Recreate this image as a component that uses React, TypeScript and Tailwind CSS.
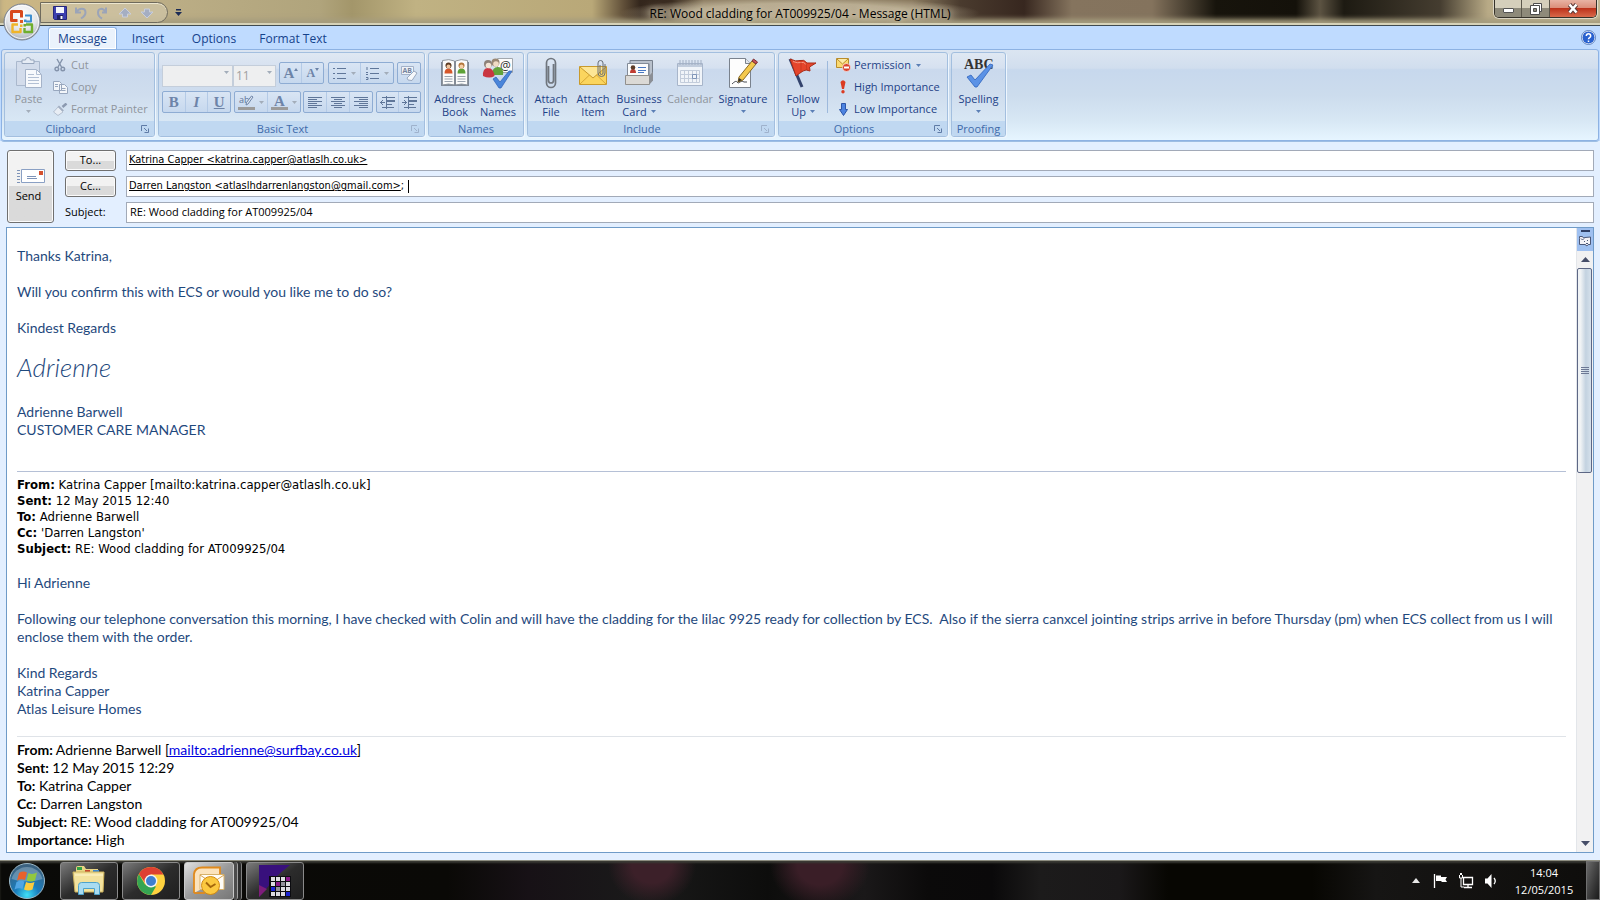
import { useState, type ReactNode } from "react";

const Caret = ({ muted = false }: { muted?: boolean }) => (
  <svg width="5" height="3" viewBox="0 0 5 3" className="shrink-0" aria-hidden="true">
    <path d="M0 0h5L2.5 3z" fill={muted ? "#a3adba" : "#5b7fb5"} />
  </svg>
);

const tabs = [
  { name: "Message", width: "w-[69px] mr-[2px]" },
  { name: "Insert", width: "w-[58px]" },
  { name: "Options", width: "w-[74px]" },
  { name: "Format Text", width: "w-[84px]" },
];

function OfficeLogo() {
  return (
    <svg width="38" height="38" viewBox="0 0 38 38" aria-hidden="true">
      <defs>
        <radialGradient id="orb" cx="50%" cy="30%" r="70%">
          <stop offset="0" stopColor="#ffffff" />
          <stop offset=".6" stopColor="#e4e6ea" />
          <stop offset="1" stopColor="#a9b0ba" />
        </radialGradient>
      </defs>
      <circle cx="19" cy="19" r="18" fill="url(#orb)" stroke="#79808c" />
      <circle cx="19" cy="19" r="16.5" fill="none" stroke="#fff" strokeOpacity=".8" />
      <g fill="none" strokeLinejoin="round">
        <path d="M14.500 17.500H8.500V8.500h10v6" stroke="#d8481c" strokeWidth="3" />
        <path d="M22 12.500h6v6h-5" stroke="#3f8fd0" strokeWidth="2" />
        <path d="M15 21.500H9.500v7.500h8v-4" stroke="#f0b429" strokeWidth="2.400" />
        <path d="M23 21.500h6v7.500h-7.500v-4" stroke="#6fae2e" strokeWidth="2.400" />
      </g>
      <g>
        <rect x="17" y="17" width="3" height="3" fill="#e05a24" />
        <rect x="21" y="16.500" width="2.500" height="2.500" fill="#3f8fd0" />
        <rect x="17" y="21.500" width="2.500" height="2.500" fill="#f0b429" />
        <rect x="20.500" y="21" width="2.500" height="2.500" fill="#6fae2e" />
      </g>
    </svg>
  );
}

function TitleBar() {
  return (
    <header className="relative flex h-[26px] items-center border-b border-[#3f4a50] bg-[radial-gradient(180px_16px_at_50%_13px,rgba(200,189,162,0.75)_60%,transparent),linear-gradient(90deg,#cdb884_0%,#c4b184_5%,#bcae86_10%,#b0a47c_20%,#a3966a_22%,#c0b283_26%,#b9a878_37%,#5f4e38_39%,#33261c_40%,#3a2c20_42%,#8b7b60_44%,#8b7b60_57%,#4a3b2e_60%,#37271f_64%,#85745e_67%,#84735d_72%,#17140c_76%,#14110a_81%,#5c5342_82.500%,#1d1a12_84%,#453d30_90%,#b8aa86_93%,#d2c8a4_100%)] shadow-[inset_0_-2px_0_#d6d2b8,inset_0_-6px_5px_#a59c7e]">
      <div className="ml-10 flex h-[21px] items-center gap-[6px] rounded-r-full border border-[#6e6a5c] bg-[#d0c6a8]/70 px-3 shadow-[inset_0_1px_0_#ece6cf]">
        <button type="button" aria-label="Save">
          <svg width="14" height="14" viewBox="0 0 14 14">
            <path d="M.5.5h13v13h-12l-1-1z" fill="#3c3fb0" stroke="#26277d" />
            <path d="M3 1h8v6H3z" fill="#f3f5fd" />
            <path d="M4 9h6v5H4z" fill="#1f2166" />
            <path d="M7.500 10h2v3h-2z" fill="#fff" />
          </svg>
        </button>
        <button type="button" aria-label="Undo">
          <svg width="16" height="14" viewBox="0 0 16 14" fill="none" stroke="#9ba4b8" strokeWidth="2">
            <path d="M3 1.500v5h5M3.500 6C6 2 12 1.500 12.500 6c.3 3-2 5-4.500 6.500" />
          </svg>
        </button>
        <button type="button" aria-label="Redo">
          <svg width="16" height="14" viewBox="0 0 16 14" fill="none" stroke="#9ba4b8" strokeWidth="2">
            <path d="M11 1.500v5H7M10.500 6C8 1.500 3 2 3 6.500c0 3 2 5 4 6" />
          </svg>
        </button>
        <button type="button" aria-label="Previous item">
          <svg width="16" height="12" viewBox="0 0 16 12">
            <path d="M8 1l6 6h-3.500v3h-5V7H2z" fill="#a5aec2" stroke="#c9cedb" />
          </svg>
        </button>
        <button type="button" aria-label="Next item">
          <svg width="16" height="12" viewBox="0 0 16 12">
            <path d="M8 11l6-6h-3.500V2h-5v3H2z" fill="#a5aec2" stroke="#c9cedb" />
          </svg>
        </button>
      </div>
      <button type="button" aria-label="Customize toolbar" className="ml-[7px]">
        <svg width="7" height="7" viewBox="0 0 7 7">
          <path d="M1 0h5v1.500H1zM0 3h7L3.500 7z" fill="#1b2b55" />
        </svg>
      </button>
      <h1 className="pointer-events-none absolute inset-x-0 top-1 text-center text-[12px] leading-5 text-black [text-shadow:0_0_6px_#d0c6ac,0_0_10px_#d0c6ac]">
        RE: Wood cladding for AT009925/04 - Message (HTML)
      </h1>
      <div className="absolute top-0 right-[3px] flex h-[18px] overflow-hidden rounded-b-[5px] border border-t-0 border-[#35322a] shadow-[0_0_0_1px_rgba(255,255,255,0.5)]">
        <button type="button" aria-label="Minimize" className="flex w-[27px] items-end justify-center border-r border-[#5b574b] bg-linear-to-b from-[#d5cfbb] from-50% to-[#8e8a7a] to-50% pb-1">
          <span className="h-[5px] w-[11px] rounded-[1px] border border-[#545454] bg-white" />
        </button>
        <button type="button" aria-label="Restore" className="flex w-7 items-center justify-center border-r border-[#5b574b] bg-linear-to-b from-[#d5cfbb] from-50% to-[#8e8a7a] to-50%">
          <svg width="12" height="12" viewBox="0 0 12 12">
            <path d="M3.500.500h8v8h-2v3h-9v-9h3z" fill="#fff" stroke="#4d4d4d" />
            <path d="M3.500 5.500h3v3h-3z" fill="#8e8a7a" stroke="#4d4d4d" />
            <path d="M3 2.500h6.500V9" fill="none" stroke="#4d4d4d" />
          </svg>
        </button>
        <button type="button" aria-label="Close" className="flex w-[46px] items-center justify-center bg-[linear-gradient(180deg,#e8b3a4_0%,#db8c78_48%,#bd331c_50%,#d9694a_100%)]">
          <svg width="12" height="11" viewBox="0 0 12 11">
            <path d="M2.500 1.500l7 8M9.500 1.500l-7 8" stroke="#5a3a38" strokeWidth="4.500" />
            <path d="M2.500 1.500l7 8M9.500 1.500l-7 8" stroke="#fff" strokeWidth="2.600" />
          </svg>
        </button>
      </div>
      <button type="button" aria-label="Office" className="absolute top-[3px] left-[3px] z-10">
        <OfficeLogo />
      </button>
    </header>
  );
}

interface GroupProps {
  title: string;
  className: string;
  launcher?: "active" | "muted";
  children: ReactNode;
}

function Group({ title, className, launcher, children }: GroupProps) {
  return (
    <section
      className={`flex shrink-0 flex-col overflow-hidden rounded-[3px] border border-[#a3bfdf] bg-[linear-gradient(180deg,#dfe8f3_0%,#d6e1f0_18%,#cad9ed_20%,#cfddee_50%,#d9e8f5_85%)] shadow-[1px_1px_0_#eef6fe] ${className}`}
    >
      <div className="flex h-[68px]">{children}</div>
      <footer className={`relative flex h-[15px] items-center justify-center bg-[#c0d8f1] text-[11px] leading-[15px] text-[#3e6aaa] ${launcher ? "pr-[18px]" : ""}`}>
        {title}
        {launcher && (
          <button type="button" aria-label={`${title} settings`} className="absolute right-[5px]">
            <svg width="8" height="8" viewBox="0 0 8 8" fill="none" stroke={launcher === "active" ? "#5f7ba6" : "#9fb2cc"}>
              <path d="M.5 6V.5H6M3 3l3 3M7.500 3.500v4h-4" />
            </svg>
          </button>
        )}
      </footer>
    </section>
  );
}

interface BigButtonProps {
  lines: string[];
  icon: ReactNode;
  className: string;
  arrow?: boolean;
  disabled?: boolean;
}

function BigButton({ lines, icon, className, arrow, disabled }: BigButtonProps) {
  return (
    <button
      type="button"
      disabled={disabled}
      className={`flex shrink-0 flex-col items-center pt-1 text-[11px] leading-[13px] whitespace-nowrap ${disabled ? "text-[#8f959d]" : "text-[#1e4287]"} ${className}`}
    >
      <span className="mb-[3px] flex h-8 items-center justify-center">{icon}</span>
      <span>{lines[0]}</span>
      <span className="flex h-[13px] items-center gap-1">
        {lines[1]}
        {arrow && <Caret muted={disabled} />}
      </span>
    </button>
  );
}

function SmallButton({ label, icon, arrow, disabled }: { label: string; icon: ReactNode; arrow?: boolean; disabled?: boolean }) {
  return (
    <button
      type="button"
      disabled={disabled}
      className={`flex h-[22px] items-center gap-[3px] text-[11px] whitespace-nowrap ${disabled ? "text-[#8f959d]" : "text-[#1e4287]"}`}
    >
      <span className="flex w-4 justify-center">{icon}</span>
      {label}
      {arrow && <span className="ml-[2px]"><Caret /></span>}
    </button>
  );
}

const ToolSet = ({ children, className }: { children: ReactNode; className: string }) => (
  <div className={`flex h-[22px] divide-x divide-[#b4cae6] rounded-[2px] border border-[#8eacd3] bg-linear-to-b from-[#d9e5f4] to-[#c6d8ee] ${className}`}>
    {children}
  </div>
);

function Tool({ label, arrow, children }: { label: string; arrow?: boolean; children: ReactNode }) {
  return (
    <button type="button" disabled aria-label={label} className="flex flex-1 items-center justify-center gap-1 text-[#6d84a8]">
      {children}
      {arrow && <Caret muted />}
    </button>
  );
}

const Bars = ({ d }: { d: string }) => (
  <svg width="15" height="13" viewBox="0 0 15 13" stroke="#5f7699" fill="none" aria-hidden="true">
    <path d={d} />
  </svg>
);

function ClipboardGroup() {
  return (
    <Group title="Clipboard" launcher="active" className="w-[151px]">
      <BigButton
        lines={["Paste"]}
        arrow
        disabled
        className="w-[47px]"
        icon={
          <svg width="28" height="32" viewBox="0 0 28 32">
            <path d="M1.500 4.500h23v24h-23z" fill="#d3dceb" stroke="#aab8cd" />
            <path d="M7 6.500V3h3.500a2.500 2.500 0 015 0H19v3.500z" fill="#e6ecf5" stroke="#97a6bd" />
            <path d="M10.500 12.500h11l5 5v13h-16z" fill="#f7f9fc" stroke="#a5b3c9" />
            <path d="M21.500 12.500v5h5M13 17.500h6M13 20.500h11M13 23.500h11M13 26.500h11" fill="none" stroke="#b3c0d4" />
          </svg>
        }
      />
      <div className="flex flex-col pt-[1px]">
        <SmallButton
          label="Cut"
          disabled
          icon={
            <svg width="12" height="14" viewBox="0 0 12 14" fill="none" stroke="#8493ab" strokeWidth="1.400">
              <path d="M3 1l4.500 8M8.500 1L4 9" />
              <circle cx="2.800" cy="11" r="1.800" />
              <circle cx="8.800" cy="11" r="1.800" />
            </svg>
          }
        />
        <SmallButton
          label="Copy"
          disabled
          icon={
            <svg width="15" height="13" viewBox="0 0 15 13" fill="#f3f6fa" stroke="#98a7be">
              <path d="M.500.500h6l2 2v7h-8zM6.500 3.500h5l3 3v6h-8z" />
              <path d="M2 3.500h3M2 5.500h3M8.500 7.500h4M8.500 9.500h4" />
            </svg>
          }
        />
        <SmallButton
          label="Format Painter"
          disabled
          icon={
            <svg width="15" height="13" viewBox="0 0 15 13">
              <path d="M13.500.500l-4 3.500" stroke="#8b99b0" strokeWidth="2.500" />
              <path d="M6 2.500l5 5-2 1-4.500-4.500z" fill="#a2aec1" />
              <path d="M5 4l5 5-5 3.500L.5 9z" fill="#e8edf4" stroke="#b3bfcf" />
            </svg>
          }
        />
      </div>
    </Group>
  );
}

function BasicTextGroup() {
  return (
    <Group title="Basic Text" launcher="muted" className="w-[267px]">
      <div className="flex flex-1 flex-col gap-[7px] px-[3px] pt-[9px]">
        <div className="flex justify-between">
          <div className="flex">
            {[["Font", "", "w-[71px]"], ["Font size", "11", "w-[43px]"]].map(([label, value, width]) => (
              <div key={label} className={`relative h-[22px] ${width}`}>
                <select
                  aria-label={label}
                  disabled
                  className="h-full w-full appearance-none border border-[#c4cedb] bg-[#eeeff0] pl-[2px] text-[12px] text-[#a0a0a0]"
                >
                  <option>{value}</option>
                </select>
                <span className="pointer-events-none absolute top-[9px] right-1">
                  <Caret muted />
                </span>
              </div>
            ))}
          </div>
          <ToolSet className="w-[45px]">
            <Tool label="Grow font">
              <span className="font-['Liberation_Serif',serif] text-[15px] leading-none font-bold">A</span>
              <svg width="4" height="3" viewBox="0 0 4 3" className="-ml-1 mb-2"><path d="M0 3h4L2 0z" fill="#6d84a8" /></svg>
            </Tool>
            <Tool label="Shrink font">
              <span className="font-['Liberation_Serif',serif] text-[12px] leading-none font-bold">A</span>
              <svg width="4" height="3" viewBox="0 0 4 3" className="-ml-1 mb-2"><path d="M0 0h4L2 3z" fill="#6d84a8" /></svg>
            </Tool>
          </ToolSet>
          <ToolSet className="w-[66px]">
            <Tool label="Bullets" arrow>
              <Bars d="M1 1.500h2M1 6.500h2M1 11.500h2M5 1.500h9M5 6.500h9M5 11.500h9" />
            </Tool>
            <Tool label="Numbering" arrow>
              <Bars d="M2 0v3M1 5.500h2M1 7.500h2M1 10.500h2v2H1M5 1.500h9M5 6.500h9M5 11.500h9" />
            </Tool>
          </ToolSet>
          <ToolSet className="w-6">
            <Tool label="Clear formatting">
              <svg width="18" height="17" viewBox="0 0 18 17">
                <path d="M1.500 1.500h12v8h-12z" fill="#eef2f8" stroke="#a2b1c8" />
                <text x="2.500" y="8" fontSize="7" fontWeight="bold" fill="#75849d">AB</text>
                <path d="M14 6l3 2-5 7.500-4-.500-1-2z" fill="#f6f8fb" stroke="#98a7be" />
              </svg>
            </Tool>
          </ToolSet>
        </div>
        <div className="flex justify-between">
          <ToolSet className="w-[69px] font-['Liberation_Serif',serif] text-[15px] leading-none font-bold">
            <Tool label="Bold">B</Tool>
            <Tool label="Italic"><i>I</i></Tool>
            <Tool label="Underline"><u>U</u></Tool>
          </ToolSet>
          <ToolSet className="w-[67px]">
            <Tool label="Highlight" arrow>
              <svg width="17" height="18" viewBox="0 0 17 18" className="overflow-visible">
                <text x="1" y="10" fontSize="9" fill="#5f7699">ab</text>
                <path d="M15 4l-5 7-2 1 .500-2.500 5-6.500z" fill="#dfe6f0" stroke="#6d84a8" />
                <path d="M0 14h17v3H0z" fill="#9b9b9b" />
              </svg>
            </Tool>
            <Tool label="Font color" arrow>
              <svg width="17" height="18" viewBox="0 0 17 18" className="overflow-visible">
                <text x="3" y="13" fontSize="15" fontWeight="bold" fontFamily="Liberation Serif" fill="#6d84a8">A</text>
                <path d="M0 14h17v3H0z" fill="#9b9b9b" />
              </svg>
            </Tool>
          </ToolSet>
          <ToolSet className="w-[70px]">
            <Tool label="Align left"><Bars d="M0 1.500h14M0 3.500h9M0 5.500h14M0 7.500h9M0 9.500h14M0 11.500h9" /></Tool>
            <Tool label="Center"><Bars d="M0 1.500h14M3 3.500h8M0 5.500h14M3 7.500h8M0 9.500h14M3 11.500h8" /></Tool>
            <Tool label="Align right"><Bars d="M0 1.500h14M5 3.500h9M0 5.500h14M5 7.500h9M0 9.500h14M5 11.500h9" /></Tool>
          </ToolSet>
          <ToolSet className="w-[45px]">
            <Tool label="Decrease indent"><Bars d="M2 1.500h13M7 4.500h8M7 5.500h8M7 8.500h5M2 11.500h12M6.500 0v13M0 6.500h5M3 4L.500 6.500 3 9" /></Tool>
            <Tool label="Increase indent"><Bars d="M2 1.500h13M7 4.500h8M7 5.500h8M7 8.500h5M2 11.500h12M6.500 0v13M0 6.500h5M2 4l2.500 2.500L2 9" /></Tool>
          </ToolSet>
        </div>
      </div>
    </Group>
  );
}

function NamesGroup() {
  return (
    <Group title="Names" className="w-24">
      <BigButton
        lines={["Address", "Book"]}
        className="ml-1 w-11"
        icon={
          <svg width="30" height="30" viewBox="0 0 30 30">
            <path d="M1 4h28v24H1z" fill="#7d8794" />
            <path d="M2.500 2.500Q9 .500 14.500 3v24q-6-2-12 0zM27.500 2.500Q21 .500 15.500 3v24q6-2 12 0z" fill="#fbfbfa" stroke="#8f969f" />
            <path d="M15 3v24" stroke="#7a828d" />
            <path d="M4.500 15.500q0-5 4-5t4 5z" fill="#d6572a" />
            <circle cx="8.500" cy="7.500" r="3" fill="#5c3b22" />
            <circle cx="8.500" cy="8.500" r="2" fill="#f0c49c" />
            <path d="M17.500 15.500q0-5 4-5t4 5z" fill="#5da236" />
            <circle cx="21.500" cy="7.500" r="3" fill="#b3763b" />
            <circle cx="21.500" cy="8.500" r="2" fill="#f5cfa8" />
            <path d="M4.500 18.500h8M4.500 21h8M4.500 23.500h8M17.500 18.500h8M17.500 21h8M17.500 23.500h8" stroke="#9aa3ae" />
          </svg>
        }
      />
      <BigButton
        lines={["Check", "Names"]}
        className="w-[42px]"
        icon={
          <svg width="32" height="32" viewBox="0 0 32 32">
            <path d="M15.500 1.500h15v14h-15z" fill="#fcfcfc" stroke="#a2a7ad" />
            <text x="18" y="13" fontSize="12" fill="#333">@</text>
            <path d="M10 18q0-8 6-8t5 8z" fill="#62a33a" />
            <circle cx="13.500" cy="5.500" r="4" fill="#9b8874" />
            <circle cx="14" cy="7" r="2.800" fill="#f1dcc5" />
            <path d="M1 19q-.500-8 5-8t6.500 8q-5 3-11.500 0z" fill="#c93541" />
            <circle cx="6" cy="7" r="4" fill="#8d8178" />
            <circle cx="6.500" cy="8.500" r="2.800" fill="#f3e3d4" />
            <path d="M11 22l3-2 4 5 9-11 3 0-11 17h-2z" fill="#4a85da" stroke="#2c5fb4" strokeWidth=".700" />
          </svg>
        }
      />
    </Group>
  );
}

function IncludeGroup() {
  return (
    <Group title="Include" launcher="muted" className="w-[248px]">
      <BigButton
        lines={["Attach", "File"]}
        className="ml-[2px] w-[42px]"
        icon={
          <svg width="12" height="32" viewBox="0 0 12 32" fill="none" stroke="#70767e" strokeWidth="1.700">
            <path d="M3.500 9v14.500a2.500 2.500 0 005 0V7M1.500 9V6a4.500 4.500 0 019 0v20a4.500 4.500 0 01-9 0V9" />
          </svg>
        }
      />
      <BigButton
        lines={["Attach", "Item"]}
        className="w-[42px]"
        icon={
          <svg width="30" height="28" viewBox="0 0 30 28">
            <path d="M1.500 7.500h27v18h-27z" fill="#fbd55e" stroke="#c99a2c" />
            <path d="M2 25l10-9.500M28 25l-10-9.500" stroke="#d9a836" />
            <path d="M2 8l13 11L28 8" fill="#fde695" stroke="#c99a2c" />
            <path d="M22 6v8a1.500 1.500 0 003 0V4a2.500 2.500 0 00-5 0v10a3.500 3.500 0 007 0V5" fill="none" stroke="#666d76" />
          </svg>
        }
      />
      <BigButton
        lines={["Business", "Card"]}
        arrow
        className="w-[50px]"
        icon={
          <svg width="30" height="28" viewBox="0 0 30 28">
            <path d="M6 1.500h22.500v17L25 23V4.500H6z" fill="#b9c1cc" stroke="#767f8c" />
            <path d="M3.500 4.500h21v14h-21z" fill="#fafbfc" stroke="#828b98" />
            <path d="M6 14q0-4 3-4t3 4z" fill="#c03c32" />
            <circle cx="9" cy="8.500" r="2.300" fill="#5b3c28" />
            <path d="M14 8.500h8M14 11.500h8M14 13.500h6" stroke="#4777c2" />
            <path d="M1.500 16.500h24v9h-24z" fill="#dbd9d6" stroke="#918f8c" />
            <path d="M25.500 16.500l3.500-4v9l-3.500 4z" fill="#8b8f96" />
          </svg>
        }
      />
      <BigButton
        lines={["Calendar"]}
        disabled
        className="w-[52px]"
        icon={
          <svg width="28" height="28" viewBox="0 0 28 28" fill="none" stroke="#a7b5ca">
            <path d="M1.500 4.500h25v22h-25z" fill="#f0f4f9" />
            <path d="M2 5h24v3H2z" fill="#c2cddd" stroke="none" />
            <path d="M4 1v5M7 1v5M10 1v5M13 1v5M16 1v5M19 1v5M22 1v5M25 1v5" stroke="#a2afc3" />
            <path d="M4.500 11.500h19v12h-19zM4.500 15.500h19M4.500 19.500h19M8.500 11.500v12M12.500 11.500v12M16.500 11.500v12M20.500 11.500v12" stroke="#c2ccdb" />
            <path d="M16.500 15.500h4v4h-4z" stroke="#7f95b8" />
          </svg>
        }
      />
      <BigButton
        lines={["Signature"]}
        arrow
        className="w-[54px]"
        icon={
          <svg width="30" height="32" viewBox="0 0 30 32">
            <path d="M1.500 1.500h16l5 5v24h-21z" fill="#fdfdfd" stroke="#7a828d" />
            <path d="M17.500 1.500v5h5" fill="#e3e7ec" stroke="#7a828d" />
            <path d="M4 27q4-4 5-2t3 0 4 0h3" fill="none" stroke="#4b4f57" />
            <path d="M11 20L24 4l4 3-13 16-5 2z" fill="#f5c94d" stroke="#8a6a22" />
            <path d="M24 4l1.500-2 4 3L28 7z" fill="#c7535b" stroke="#7c3237" />
            <path d="M10 25l1-4 3 2z" fill="#33312e" />
          </svg>
        }
      />
    </Group>
  );
}

function OptionsGroup() {
  return (
    <Group title="Options" launcher="active" className="w-[170px]">
      <BigButton
        lines={["Follow", "Up"]}
        arrow
        className="w-12"
        icon={
          <svg width="30" height="32" viewBox="0 0 30 32">
            <path d="M2 2l12 28" stroke="#33436d" strokeWidth="3" />
            <path d="M2 2q6 3 10 1.500t7 2.500l9 0-6.500 4 .500 4q-4-2-7 0t-7 5z" fill="#e5452b" stroke="#a92c19" />
            <path d="M5 4.500q5 2 8 1t5 2" fill="none" stroke="#f69780" />
            <path d="M13 4v11M18 6.500l1 7" stroke="#b8331d" strokeOpacity=".6" />
          </svg>
        }
      />
      <div className="my-2 w-px bg-[#9db9dc]" />
      <div className="flex flex-col pt-[1px] pl-[7px]">
        <SmallButton
          label="Permission"
          arrow
          icon={
            <svg width="15" height="14" viewBox="0 0 15 14">
              <path d="M.500.500h12v9H.500z" fill="#fbd970" stroke="#b98d2c" />
              <path d="M1 1l5.500 5L12 1" fill="#fdeba8" stroke="#b98d2c" />
              <circle cx="10.500" cy="9.500" r="4" fill="#d9422c" stroke="#fff" strokeWidth=".600" />
              <path d="M8 9.500h5" stroke="#fff" strokeWidth="1.800" />
            </svg>
          }
        />
        <SmallButton
          label="High Importance"
          icon={
            <svg width="6" height="14" viewBox="0 0 6 14" fill="#db3b22">
              <path d="M.500 2Q3-1.500 5.500 2L4 9H2z" />
              <circle cx="3" cy="11.800" r="1.700" />
            </svg>
          }
        />
        <SmallButton
          label="Low Importance"
          icon={
            <svg width="9" height="13" viewBox="0 0 9 13">
              <path d="M2.500.500h4v6h2l-4 6-4-6h2z" fill="#4c83e0" stroke="#2c55a8" />
            </svg>
          }
        />
      </div>
    </Group>
  );
}

function ProofingGroup() {
  return (
    <Group title="Proofing" className="w-[55px]">
      <BigButton
        lines={["Spelling"]}
        arrow
        className="w-full"
        icon={
          <svg width="32" height="32" viewBox="0 0 32 32">
            <text x="1" y="12" fontSize="14" fontWeight="bold" fontFamily="Liberation Serif" fill="#333">ABC</text>
            <path d="M4 20l4-2 4 5L27 7l3 1-16 22h-2z" fill="#5b92e6" stroke="#2c62bd" strokeWidth=".800" />
          </svg>
        }
      />
    </Group>
  );
}

function Ribbon() {
  const [active, setActive] = useState("Message");

  return (
    <div className="bg-[#bfdbff]">
      <nav className="relative flex h-[23px] items-end pl-12">
        {tabs.map((tab) => (
          <button
            key={tab.name}
            type="button"
            onClick={() => setActive(tab.name)}
            className={`h-[22px] pt-px text-[12px] whitespace-nowrap text-[#15428b] ${tab.width} ${
              active === tab.name ? "rounded-t-[3px] border border-b-0 border-[#8db2e3] bg-[#eaf2fc] shadow-[inset_0_0_0_1px_#fff]" : ""
            }`}
          >
            {tab.name}
          </button>
        ))}
        <button type="button" aria-label="Help" className="absolute top-1 right-1">
          <svg width="15" height="15" viewBox="0 0 15 15">
            <circle cx="7.500" cy="7.500" r="6.500" fill="#2a62cf" stroke="#fff" />
            <circle cx="7.500" cy="7.500" r="7" fill="none" stroke="#3f67ad" strokeWidth=".800" />
            <path d="M5.300 6q0-2.300 2.200-2.300T9.700 6q0 1-1.100 1.600T7.500 9.300M7.500 10.500v1.500" fill="none" stroke="#fff" strokeWidth="1.500" />
          </svg>
        </button>
      </nav>
      <div className="mx-px flex h-[92px] gap-[3px] rounded-[3px] border border-[#8db2e3] bg-[linear-gradient(180deg,#dbe5f1_0%,#d1deee_20%,#c7d8ed_22%,#ccdced_50%,#d7e7f4_78%,#e6f5ff_100%)] px-[2px] pt-[2px] pb-[3px] shadow-[0_1px_0_#9dbde3]">
        <ClipboardGroup />
        <BasicTextGroup />
        <NamesGroup />
        <IncludeGroup />
        <OptionsGroup />
        <ProofingGroup />
      </div>
    </div>
  );
}

const grayButton = "border border-[#707070] rounded-[3px] bg-linear-to-b from-[#f2f2f2] from-50% to-[#dadada] to-50% text-black shadow-[inset_0_0_0_1px_#fbfbfb]";
const fieldBox = "flex h-[21px] min-w-0 items-center border border-[#a2aab8] bg-white px-[2px] text-black";
const tahoma = "font-['DejaVu_Sans_Condensed','DejaVu_Sans',sans-serif]";

function Recipients() {
  const [subject, setSubject] = useState("RE: Wood cladding for AT009925/04");

  return (
    <div className="flex gap-[11px] pt-[9px] pr-[6px] pb-1 pl-[7px] text-[11px]">
      <button type="button" className={`flex w-[47px] flex-col items-center justify-center ${grayButton}`}>
        <svg width="30" height="16" viewBox="0 0 30 16">
          <path d="M5.500 1.500h23v13h-23z" fill="#fff" stroke="#8aa0c4" />
          <path d="M1 2.500h3M1 5.500h3M1 8.500h3M1 11.500h3M1 14.500h3M11 8.500h9M11 10.500h10" stroke="#7d93b8" />
          <path d="M23 3h4v4h-4z" fill="#d4512f" />
        </svg>
        <span className="mt-1 pr-1">Send</span>
      </button>
      <div className="grid flex-1 grid-cols-[51px_1fr] items-center gap-x-[10px] gap-y-[5px]">
        <button type="button" className={`h-[21px] ${grayButton}`}>To...</button>
        <div className={`${fieldBox} ${tahoma}`}>
          <input aria-label="To" defaultValue="Katrina Capper <katrina.capper@atlaslh.co.uk>" className="w-full underline outline-none" />
        </div>
        <button type="button" className={`h-[21px] ${grayButton}`}>Cc...</button>
        <div className={`${fieldBox} ${tahoma}`}>
          <input aria-label="Cc" defaultValue="Darren Langston <atlaslhdarrenlangston@gmail.com>" className="field-sizing-content underline outline-none" />
          <span>;</span>
          <span className="ml-1 h-[13px] w-px bg-black" />
        </div>
        <label htmlFor="subject">Subject:</label>
        <div className={fieldBox}>
          <input id="subject" value={subject} onChange={(e) => setSubject(e.target.value)} className="w-full pl-px outline-none" />
        </div>
      </div>
    </div>
  );
}

const firstHeader = [
  ["From:", "Katrina Capper [mailto:katrina.capper@atlaslh.co.uk]"],
  ["Sent:", "12 May 2015 12:40"],
  ["To:", "Adrienne Barwell"],
  ["Cc:", "'Darren Langston'"],
  ["Subject:", "RE: Wood cladding for AT009925/04"],
];

const secondHeader = [
  ["Sent:", "12 May 2015 12:29"],
  ["To:", "Katrina Capper"],
  ["Cc:", "Darren Langston"],
  ["Subject:", "RE: Wood cladding for AT009925/04"],
  ["Importance:", "High"],
];

const reply =
  "Following our telephone conversation this morning, I have checked with Colin and will have the cladding for the lilac 9925 ready for collection by ECS.  Also if the sierra canxcel jointing strips arrive in before Thursday (pm) when ECS collect from us I will enclose them with the order.";

function MessageBody() {
  return (
    <article className="min-w-0 flex-1 px-[10px] pt-[19px] font-[Lato,sans-serif] text-[14px] leading-[18px] text-[#1f497d]">
      <p>Thanks Katrina,</p>
      <p className="mt-[18px]">Will you confirm this with ECS or would you like me to do so?</p>
      <p className="mt-[18px]">Kindest Regards</p>
      <p className="mt-4 text-[26px] leading-7 font-light italic">Adrienne</p>
      <p className="mt-[22px]">Adrienne Barwell</p>
      <p>CUSTOMER CARE MANAGER</p>
      <div className={`mt-8 border-t border-[#b5c0d6] pt-[5px] text-[13px] leading-4 text-black ${tahoma}`}>
        {firstHeader.map(([name, value]) => (
          <p key={name}>
            <b>{name}</b> {value}
          </p>
        ))}
      </div>
      <p className="mt-[17px]">Hi Adrienne</p>
      <p className="mt-[18px] whitespace-pre-wrap">{reply}</p>
      <p className="mt-[18px]">Kind Regards</p>
      <p>Katrina Capper</p>
      <p>Atlas Leisure Homes</p>
      <div className="mt-[18px] border-t border-[#dfe3e8] pt-1 text-black">
        <p>
          <b>From:</b> Adrienne Barwell [<a href="mailto:adrienne@surfbay.co.uk" className="text-[#0000e0] underline">mailto:adrienne@surfbay.co.uk</a>]
        </p>
        {secondHeader.map(([name, value]) => (
          <p key={name}>
            <b>{name}</b> {value}
          </p>
        ))}
      </div>
    </article>
  );
}

function ScrollRail() {
  return (
    <div className="flex w-[17px] shrink-0 flex-col border-l border-[#e3e6ea] bg-[#f1f1f2]">
      <button type="button" aria-label="Select browse object" className="flex h-[23px] flex-col items-center justify-between bg-[#9fc0f0] pt-[2px] pb-1">
        <span className="h-[2px] w-[9px] bg-[#2f3f66]" />
        <svg width="12" height="12" viewBox="0 0 12 12" fill="#f4f2f6" stroke="#4c5878">
          <path d="M.500 3.500V1.500h3l1 1.500L6 2.500l5.500-.500v7.500H9l-1 1.500-2-1.500H.500z" />
          <path d="M2 3.500l1.500 1.500L5 3.500M5 6.500h1M8 5.500h1M6.500 9.500L8 8l1.500 1.500" />
        </svg>
      </button>
      <button type="button" aria-label="Scroll up" className="flex h-[17px] items-center justify-center">
        <svg width="9" height="5" viewBox="0 0 9 5"><path d="M0 5h9L4.500 0z" fill="#454d68" /></svg>
      </button>
      <div className="mr-px flex h-[205px] flex-col items-center justify-center gap-px rounded-[2px] border border-[#5d6785] bg-linear-to-r from-[#f0f3f5] from-20% via-[#c3d2e0] via-60% to-[#d5e1ec]">
        <span className="h-px w-2 bg-[#6c7894]" />
        <span className="h-px w-2 bg-[#6c7894]" />
        <span className="h-px w-2 bg-[#6c7894]" />
        <span className="h-px w-2 bg-[#6c7894]" />
      </div>
      <button type="button" aria-label="Scroll down" className="mt-auto flex h-[18px] items-center justify-center">
        <svg width="9" height="5" viewBox="0 0 9 5"><path d="M0 0h9L4.500 5z" fill="#454d68" /></svg>
      </button>
    </div>
  );
}

const taskButton = "flex h-[38px] w-[58px] items-center justify-center rounded-[3px] border border-[#8a8a8a] bg-linear-to-br from-[#7b7b7b] via-[#2c2c2c] via-50% to-[#1f1f1f]";

function Taskbar() {
  return (
    <footer className="flex h-10 items-center border-t border-[#8d8d80] bg-[radial-gradient(44px_40px_at_652px_4px,#3c2029_45%,transparent),radial-gradient(50px_44px_at_820px_4px,#3a1e27_45%,transparent),linear-gradient(90deg,#0a0a08_0%,#0a0906_28%,#171116_33%,#1a1a1a_40%,#0d0d0c_48%,#1a1819_54%,#0b0a0a_58%,#0a090a_62%,#1c1b1b_65%,#1a1819_70%,#070602_73%,#070602_82%,#161514_86%,#0e0d0b_100%)] shadow-[inset_0_2px_2px_#3a3a34]">
      <button type="button" aria-label="Start" className="mx-2">
        <svg width="38" height="38" viewBox="0 0 38 38">
          <defs>
            <radialGradient id="start" cx="50%" cy="90%" r="85%">
              <stop offset="0" stopColor="#3fe0f8" />
              <stop offset=".4" stopColor="#1a7cbc" />
              <stop offset="1" stopColor="#3c617e" />
            </radialGradient>
          </defs>
          <circle cx="19" cy="19" r="17.500" fill="url(#start)" stroke="#9db9c8" />
          <path d="M3.500 17a16 16 0 0131 0q-16 5-31 0z" fill="#fff" fillOpacity=".25" />
          <path d="M11 11q4-2.500 8-.500l-2 7.500q-4-1.500-8 .500z" fill="#e8622c" />
          <path d="M20.500 11q4 2 8.500-.500l-2 8q-4 2-8.500 0z" fill="#92c83e" />
          <path d="M8.500 20q4-2 8-.500l-2 7.500q-4-1.500-8 .500z" fill="#4fa5e4" />
          <path d="M18 20q4 2 8.500 0l-2 7.500q-4 2-8.500 0z" fill="#fbcb3d" />
        </svg>
      </button>
      <div className="ml-[6px] flex gap-1">
        <button type="button" aria-label="File Explorer" className={taskButton}>
          <svg width="34" height="32" viewBox="0 0 34 32">
            <path d="M4 3q0-2 2-2h6l2 3h12v4H4z" fill="#e9d584" />
            <path d="M5 2h5v3H5z" fill="#35a244" />
            <path d="M13 5h5v3h-5z" fill="#c8482e" />
            <path d="M21 5h6v3h-6z" fill="#3f8ad0" />
            <path d="M1 7h31l-1 20H3z" fill="#f3e29e" stroke="#cdb25c" />
            <path d="M3 10h28" stroke="#fff6cf" />
            <path d="M6.500 29.500v-9q0-3 3-3h15q3 0 3 3v9h-5v-6h-11v6z" fill="#a9dcf2" stroke="#4fa3cb" />
          </svg>
        </button>
        <button type="button" aria-label="Chrome" className={taskButton}>
          <svg width="30" height="30" viewBox="0 0 30 30">
            <circle cx="15" cy="15" r="14" fill="#ffd23f" />
            <path d="M2.900 8A14 14 0 0015 29l5-8.500L9 18.500z" fill="#35a552" />
            <path d="M2.900 8A14 14 0 0127.400 8.500H15l-6 8z" fill="#dd4031" />
            <circle cx="15" cy="15" r="6.400" fill="#f4f4f4" />
            <circle cx="15" cy="15" r="5" fill="#3f7fd0" />
          </svg>
        </button>
        <div className="flex">
          <button type="button" aria-label="Outlook" className="flex h-[38px] w-[50px] items-center justify-center rounded-[3px] border border-[#c9c9c9] bg-linear-to-br from-[#e0e0e0] via-[#9a9a9a] via-50% to-[#777]">
            <svg width="34" height="30" viewBox="0 0 34 30">
              <path d="M2 27V8Q3 1.500 10 1.500h18v12" fill="#fbe3bd" stroke="#e08a1c" strokeWidth="1.800" />
              <path d="M2 27h11" stroke="#e08a1c" strokeWidth="1.800" />
              <path d="M8 8.500h24v15H8z" fill="#fffdf7" stroke="#d7b16a" />
              <path d="M8 9l12 8L32 9" fill="none" stroke="#d9a24a" />
              <circle cx="18.500" cy="19.500" r="9" fill="#fbc840" stroke="#d28a12" />
              <path d="M14 16.500l4.500 4.500 5-3" fill="none" stroke="#a3650b" strokeWidth="1.800" />
            </svg>
          </button>
          <span className="h-[38px] w-1 rounded-r-[3px] border-r border-[#a0a0a0] bg-[#4c4c4c]" />
          <span className="h-[38px] w-1 rounded-r-[3px] border-r border-[#808080] bg-[#2d2d2d]" />
        </div>
        <button type="button" aria-label="Pixel application" className={taskButton}>
          <svg width="34" height="32" viewBox="0 0 34 32">
            <path d="M1 0h31L20 10 1 32z" fill="#38107c" />
            <path d="M1 20L9 24 1 32z" fill="#7d1c7a" />
            <path d="M11 11h22v21H11z" fill="#0c0c10" />
            <g fill="#dcdce0">
              <path d="M13 12h4v4h-4zM18 12h4v4h-4zM23 12h4v4h-4zM13 17h4v4h-4zM28 17h4v4h-4zM23 22h4v4h-4zM28 22h4v4h-4zM13 27h4v4h-4zM18 27h4v4h-4zM23 27h4v4h-4z" />
            </g>
            <path d="M28 12h4v4h-4zM18 17h4v4h-4z" fill="#8c1b8a" />
            <path d="M13 22h4v4h-4zM28 27h4v4h-4z" fill="#1b24d4" />
            <path d="M23 17h4v4h-4zM18 22h4v4h-4z" fill="#92929a" />
          </svg>
        </button>
      </div>
      <div className="ml-auto flex h-full items-center text-white">
        <button type="button" aria-label="Show hidden icons">
          <svg width="8" height="5" viewBox="0 0 8 5"><path d="M0 5h8L4 0z" fill="#e8e8e8" /></svg>
        </button>
        <svg width="16" height="16" viewBox="0 0 16 16" className="ml-[13px]" aria-hidden="true">
          <path d="M1.500 1v14" stroke="#fff" strokeWidth="1.300" />
          <path d="M3 2.500h5v1.500h6l-1.500 2.500L14 9H8.500V8H3z" fill="#fff" />
        </svg>
        <svg width="16" height="16" viewBox="0 0 16 16" className="ml-[9px]" fill="none" stroke="#fff" aria-hidden="true">
          <path d="M5.500 4.500h9v7h-9zM10 12v2M6 14.500h8" strokeWidth="1.300" />
          <path d="M1.500 2v3h3V2M2.500 0v2M3.500 0v2M3 5v9h3" />
        </svg>
        <svg width="14" height="16" viewBox="0 0 14 16" className="ml-[10px]" aria-hidden="true">
          <path d="M1 5.500h2.500L7.500 1v14L3.500 10.500H1z" fill="#fff" />
          <path d="M10 5q2.500 3 0 6" fill="none" stroke="#fff" strokeWidth="1.300" />
        </svg>
        <div className="ml-4 w-[60px] text-center text-[11px] leading-[17px]">
          <div>14:04</div>
          <div>12/05/2015</div>
        </div>
        <button type="button" aria-label="Show desktop" className="ml-3 h-full w-[14px] border border-[#6f6f6f] bg-linear-to-br from-[#6a6a6a] to-[#1b1b1b]" />
      </div>
    </footer>
  );
}

export default function App() {
  return (
    <div className="flex min-h-screen flex-col bg-[#e3efff] font-['Open_Sans',sans-serif]">
      <TitleBar />
      <Ribbon />
      <Recipients />
      <main className="mx-[6px] mb-[7px] flex flex-1 border border-[#6f9bc8] bg-white">
        <MessageBody />
        <ScrollRail />
      </main>
      <Taskbar />
    </div>
  );
}
